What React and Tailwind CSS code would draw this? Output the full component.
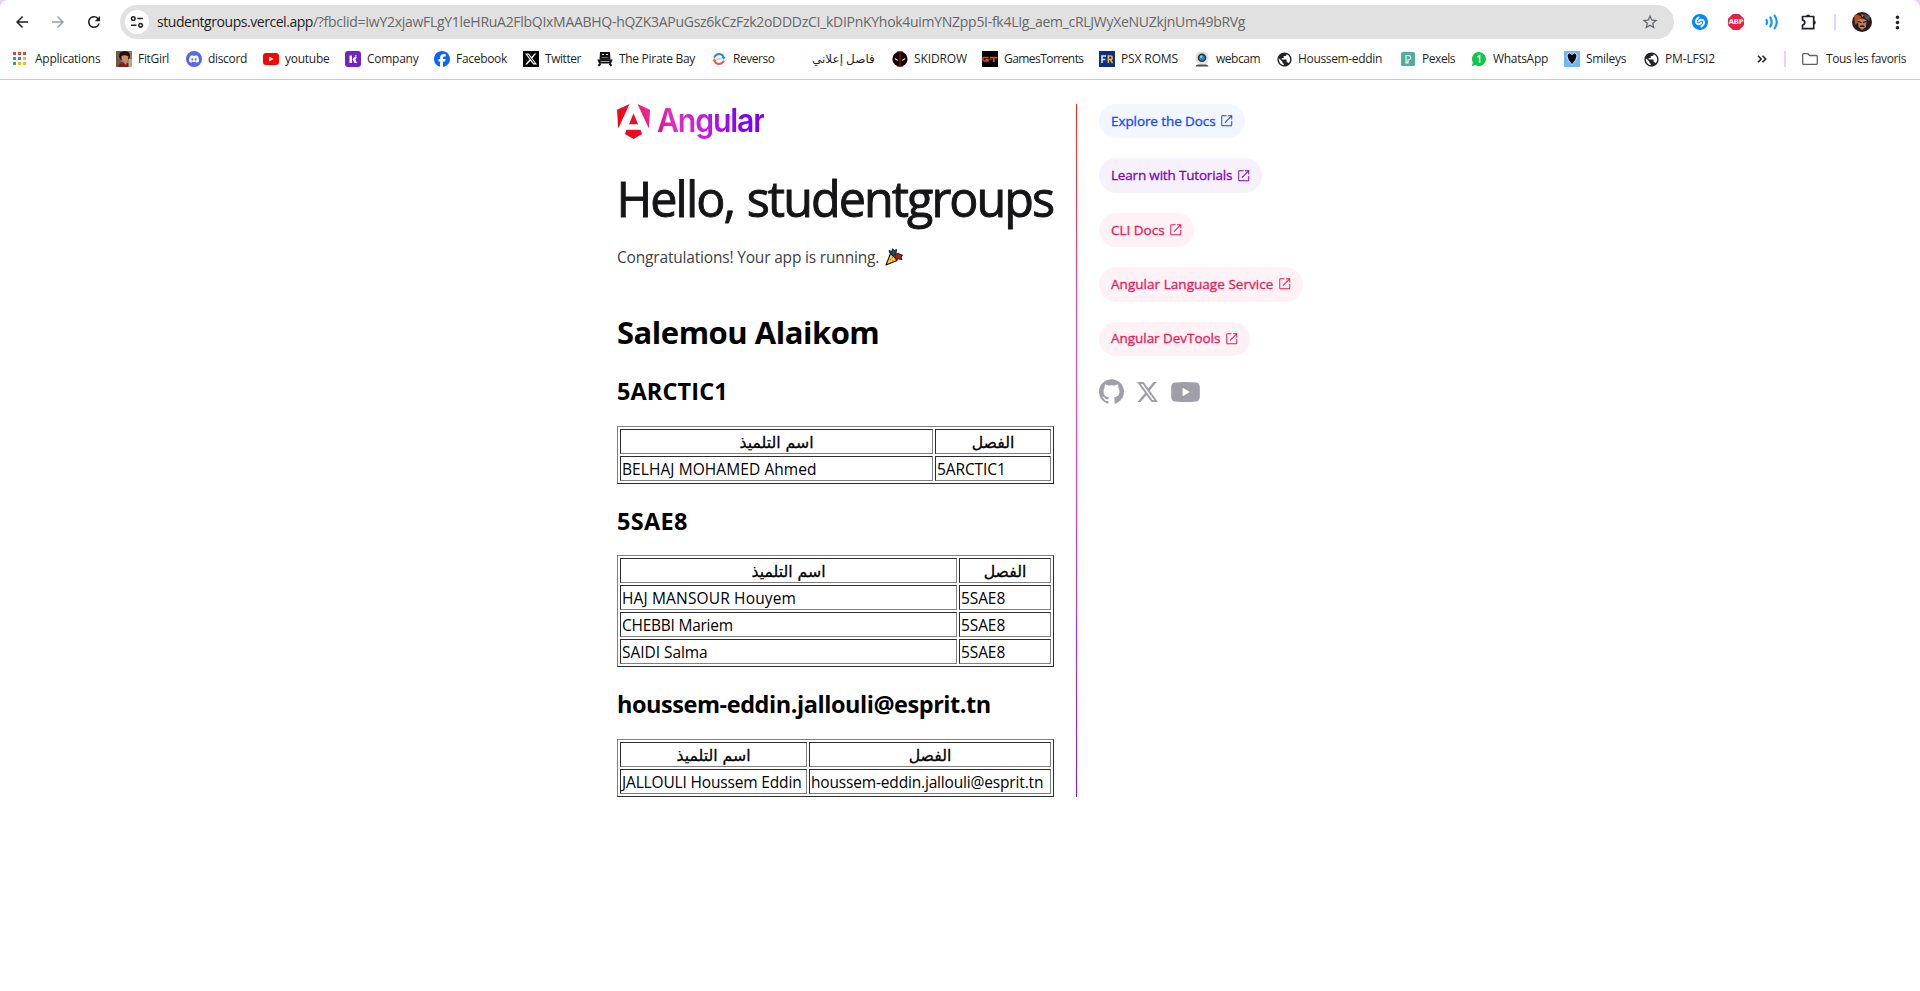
import { MdArrowBack, MdArrowForward, MdRefresh, MdStarBorder, MdMoreVert, MdPublic } from "react-icons/md";
import { SiDiscord, SiFacebook, SiGithub, SiShazam, SiX } from "react-icons/si";

const Box = ({ children }) => (
  <svg width="16" height="16" viewBox="0 0 16 16" className="shrink-0">
    {children}
  </svg>
);

const AppsIcon = () => (
  <Box>
    {["#ea4335", "#ea4335", "#ea4335", "#34a853", "#1a8cff", "#fbbc05", "#34a853", "#fbbc05", "#fbbc05"].map((c, i) => (
      <rect key={i} x={(i % 3) * 5} y={Math.floor(i / 3) * 5 + 1} width="3" height="3" fill={c} />
    ))}
  </Box>
);

const FitGirlIcon = () => (
  <Box>
    <rect width="16" height="16" fill="#8b7a5c" />
    <rect width="5" height="16" fill="#6b5d4a" />
    <path d="M3 6Q3 0 8.500 0Q14.500 0 14 6L12.500 9L5 9Z" fill="#2a0f0c" />
    <path d="M5.500 5Q9 3.500 12.300 5.500Q12.500 10 9.500 11.500Q6.500 11 5.500 8Z" fill="#d08a68" />
    <path d="M2 16Q3 11 7.500 11L13 12.500L14.500 16Z" fill="#7c1f1a" />
    <path d="M7 11L10 14L11 11Z" fill="#c98a6c" />
    <rect x="12.500" y="8" width="3.500" height="8" fill="#b9aa8e" />
  </Box>
);

const DiscordIcon = () => (
  <span className="flex size-4 shrink-0 items-center justify-center rounded-full bg-[#5865f2] text-white">
    <SiDiscord size={10} />
  </span>
);

const YoutubeIcon = () => (
  <Box>
    <rect y="2" width="16" height="12" rx="3" fill="#f00" />
    <path d="M6.200 5.500V10.500L10.600 8Z" fill="#fff" />
  </Box>
);

const CompanyIcon = () => (
  <Box>
    <rect width="16" height="16" rx="3" fill="#7222c9" />
    <path d="M4.500 4.500H7V12H4.500Z" fill="#fff" />
    <path d="M7.500 8.300L9.500 6H12L10.300 8.500L12 12H9.500Z" fill="#fff" />
    <circle cx="10.800" cy="4.800" r="1.100" fill="#7fd8ff" />
  </Box>
);

const FacebookIcon = () => <SiFacebook size={16} color="#0866ff" className="shrink-0" />;

const TwitterIcon = () => (
  <span className="flex size-4 shrink-0 items-center justify-center bg-black text-white">
    <SiX size={12} />
  </span>
);

const PirateIcon = () => (
  <Box>
    <path d="M3 1H13L13.500 8.700H2.500Z" fill="#111" />
    <path d="M5 3.500H7M9 3.500H11" stroke="#fff" strokeWidth="0.900" />
    <path d="M4.500 6.500H11.500" stroke="#999" strokeWidth="0.700" />
    <path d="M0.300 8.500H15.700L14 12.500H2Z" fill="#111" />
    <path d="M3.500 10.500H12.500" stroke="#ccc" strokeWidth="0.800" />
    <path d="M1.500 14.800L3.500 12.500M14.500 14.800L12.500 12.500" stroke="#111" strokeWidth="2" fill="none" />
  </Box>
);

const ReversoIcon = () => (
  <Box>
    <rect width="16" height="16" rx="2" fill="#f6fafe" />
    <path d="M3 6.500Q5 2.800 8.500 3Q11.800 3.300 12.600 6.300" stroke="#2e86d8" strokeWidth="1.800" fill="none" />
    <path d="M10.500 6H14.500L12.700 8.700Z" fill="#2e86d8" />
    <path d="M13 9.800Q11 13.200 7.500 13Q4.200 12.700 3.400 9.800" stroke="#ef5a45" strokeWidth="1.800" fill="none" />
    <path d="M1.500 10H5.500L3.300 7.300Z" fill="#ef5a45" />
    <path d="M5.500 8H10.500" stroke="#8fb9dc" strokeWidth="1" />
  </Box>
);

const SkidrowIcon = () => (
  <Box>
    <circle cx="8" cy="8" r="7.600" fill="#160305" />
    <path d="M8 0.400V15.600" stroke="#7c1016" strokeWidth="1.400" />
    <path d="M5 1L8 0.300L11 1M5 15L8 15.700L11 15" stroke="#a3141b" strokeWidth="0.900" fill="none" />
    <path d="M2.600 7L6.600 9.200Q3.600 10.600 2.600 7ZM13.400 7L9.400 9.200Q12.400 10.600 13.400 7Z" fill="#fff" />
  </Box>
);

const GamesIcon = () => (
  <Box>
    <rect width="16" height="16" fill="#000" />
    <path d="M6.500 6.600H2.200Q0.900 6.600 0.900 8.300Q0.900 10 2.200 10H6V8.400H3.500" stroke="#e2461c" strokeWidth="1.500" fill="none" />
    <path d="M8 6.600H15.600M11.800 6.600V11" stroke="#e2461c" strokeWidth="1.700" fill="none" />
    <path d="M6 8.300H10" stroke="#a32c10" strokeWidth="1" />
  </Box>
);

const PsxIcon = () => (
  <Box>
    <rect width="16" height="16" fill="#0b3187" />
    <path d="M3 12V5H7M3 8.500H6.300" stroke="#dfe6f2" strokeWidth="1.600" fill="none" />
    <path d="M9.300 12V5H11.500Q13.200 5 13.200 6.700Q13.200 8.500 11.500 8.500H9.500M11.300 8.500L13.500 12" stroke="#f2b92c" strokeWidth="1.500" fill="none" />
  </Box>
);

const WebcamIcon = () => (
  <Box>
    <rect x="1.500" y="0.500" width="13" height="12.500" rx="5" fill="#e2e2e2" />
    <circle cx="8" cy="6.800" r="4.300" fill="#2b3137" />
    <circle cx="8" cy="6.800" r="2.900" fill="#1c86c9" />
    <circle cx="7.200" cy="5.700" r="1.200" fill="#8fd3f5" />
    <path d="M1.500 15.500Q2 13.300 5 13.500H11Q14 13.300 14.500 15.500Z" fill="#4b4b4b" />
  </Box>
);

const GlobeIcon = () => <MdPublic size={17} color="#202124" className="-mx-[0.5px] shrink-0" />;

const PexelsIcon = () => (
  <Box>
    <rect x="1" y="1" width="14" height="14" rx="1.500" fill="#4fae9c" />
    <path d="M6 12V4.500H8.500Q10.700 4.500 10.700 6.600Q10.700 8.700 8.500 8.700H8V12Z" stroke="#fff" strokeWidth="1.100" fill="none" />
  </Box>
);

const WhatsappIcon = () => (
  <Box>
    <path d="M8 1A7 7 0 1 1 4.500 14.100L0.800 15.200L1.900 11.500A7 7 0 0 1 8 1Z" fill="#12c64a" />
    <path d="M6.300 6.200L8.600 4.700V11.800" stroke="#fff" strokeWidth="1.500" fill="none" />
  </Box>
);

const SmileysIcon = () => (
  <Box>
    <rect width="16" height="16" fill="#6fb7f7" />
    <path d="M8 13.800Q3 8.500 3 5Q3 2 5.500 2Q7.300 2 8 3.700Q8.700 2 10.500 2Q13 2 13 5Q13 8.500 8 13.800Z" fill="#0a0a14" stroke="#e8f4ff" strokeWidth="0.900" />
  </Box>
);

const FolderIcon = () => (
  <svg width="16" height="16" viewBox="0 0 16 16" fill="none" className="shrink-0">
    <path d="M1.700 2.700H6L7.600 4.500H14.300Q15.300 4.500 15.300 5.500V12.400Q15.300 13.400 14.300 13.400H1.700Q0.700 13.400 0.700 12.400V3.700Q0.700 2.700 1.700 2.700Z" stroke="#5f6368" strokeWidth="1.300" />
  </svg>
);

const bookmarks = [
  { label: "Applications", Icon: AppsIcon, box: "w-[103px]", text: "tracking-[-0.24px]" },
  { label: "FitGirl", Icon: FitGirlIcon, box: "w-[70px]", text: "tracking-[-0.3px]" },
  { label: "discord", Icon: DiscordIcon, box: "w-[77px]", text: "tracking-[-0.33px]" },
  { label: "youtube", Icon: YoutubeIcon, box: "w-[82px]", text: "tracking-[-0.26px]" },
  { label: "Company", Icon: CompanyIcon, box: "w-[89px]", text: "tracking-[-0.26px]" },
  { label: "Facebook", Icon: FacebookIcon, box: "w-[89px]", text: "tracking-[-0.3px]" },
  { label: "Twitter", Icon: TwitterIcon, box: "w-[74px]", text: "tracking-[-0.44px]" },
  { label: "The Pirate Bay", Icon: PirateIcon, box: "w-[114px]", text: "tracking-[-0.3px]" },
  { label: "Reverso", Icon: ReversoIcon, box: "w-[79px]", text: "tracking-[-0.46px]" },
  { label: "فاصل إعلاني", Icon: Box, box: "w-[102px]", text: "tracking-normal" },
  { label: "SKIDROW", Icon: SkidrowIcon, box: "w-[90px]", text: "tracking-[-0.11px]" },
  { label: "GamesTorrents", Icon: GamesIcon, box: "w-[117px]", text: "tracking-[-0.55px]" },
  { label: "PSX ROMS", Icon: PsxIcon, box: "w-[95px]", text: "tracking-[-0.12px]" },
  { label: "webcam", Icon: WebcamIcon, box: "w-[82px]", text: "tracking-[-0.48px]" },
  { label: "Houssem-eddin", Icon: GlobeIcon, box: "w-[124px]", text: "tracking-[-0.34px]" },
  { label: "Pexels", Icon: PexelsIcon, box: "w-[71px]", text: "tracking-[-0.45px]" },
  { label: "WhatsApp", Icon: WhatsappIcon, box: "w-[93px]", text: "tracking-[-0.3px]" },
  { label: "Smileys", Icon: SmileysIcon, box: "w-[79px]", text: "tracking-[-0.31px]" },
  { label: "PM-LFSI2", Icon: GlobeIcon, box: "w-[114px]", text: "tracking-[-0.14px]" },
];

const Slot = ({ children }) => <div className="flex h-full w-9 shrink-0 items-center justify-center">{children}</div>;

function Toolbar() {
  return (
    <div className="flex h-11 items-center pl-1">
      <Slot><MdArrowBack size={18} color="#202124" /></Slot>
      <Slot><MdArrowForward size={18} color="#9aa0a6" /></Slot>
      <Slot><MdRefresh size={18} color="#202124" /></Slot>
      <div className="ml-2 flex h-[34px] w-[1554px] shrink-0 items-center rounded-full bg-[#e1e1e1] pl-[5px] pr-[15px]">
        <span className="flex size-6 shrink-0 items-center justify-center rounded-full bg-white">
          <svg width="14" height="14" viewBox="0 0 14 14" fill="none" stroke="#202124" strokeWidth="1.500">
            <circle cx="3.300" cy="3.600" r="1.800" />
            <path d="M7.300 3.600H12.800M1 10.300H6.500" />
            <circle cx="10.600" cy="10.300" r="1.800" />
          </svg>
        </span>
        <span className="ml-2 flex grow whitespace-nowrap text-[14px] leading-5">
          <span className="tracking-[-0.45px] text-[#1f1f1f]">studentgroups.vercel.app</span>
          <span className="tracking-[-0.285px] text-[#686868]">/?fbclid=IwY2xjawFLgY1leHRuA2FlbQIxMAABHQ-hQZK3APuGsz6kCzFzk2oDDDzCI_kDIPnKYhok4uimYNZpp5I-fk4LIg_aem_cRLJWyXeNUZkjnUm49bRVg</span>
        </span>
        <MdStarBorder size={18} color="#5f6368" />
      </div>
      <div className="ml-2 flex h-full">
        <Slot><SiShazam size={16} color="#0088ff" /></Slot>
        <Slot>
          <span className="flex size-4 items-center justify-center bg-[#ed1e45] text-[7.5px] font-bold leading-none tracking-[-0.2px] text-white [clip-path:polygon(30%_0,70%_0,100%_30%,100%_70%,70%_100%,30%_100%,0_70%,0_30%)]">ABP</span>
        </Slot>
        <Slot>
          <svg width="14" height="16" viewBox="0 0 14 16" fill="none" stroke="#1a94ff" strokeWidth="2.200" strokeLinecap="round">
            <path d="M1.500 6Q2.600 8 1.500 10M5.300 3.500Q8 8 5.300 12.500M9.600 1.700Q14 8 9.600 14.300" />
          </svg>
        </Slot>
        <Slot>
          <svg width="18" height="18" viewBox="0 0 18 18" fill="none" className="ml-[2px]">
            <path d="M2.500 3.500H13.700V15.700H2.500V12Q4.800 11.800 4.800 9.600Q4.800 7.400 2.500 7.200Z" stroke="#202124" strokeWidth="1.700" strokeLinejoin="round" />
            <path d="M6 3.500A2.100 2.100 0 0 1 10.200 3.500ZM13.700 7.500A2.100 2.100 0 0 1 13.700 11.700Z" fill="#202124" />
          </svg>
        </Slot>
      </div>
      <div className="ml-2 h-4 w-[2px] bg-[#e6d3fb]" />
      <svg width="20" height="20" viewBox="0 0 20 20" className="ml-4 shrink-0 overflow-hidden rounded-full">
        <rect width="20" height="20" fill="#2b1a17" />
        <path d="M2 2L9 4L8 9L3 13Z" fill="#b3501f" />
        <path d="M12 2L18 4L17 9L13 6Z" fill="#4d5060" />
        <path d="M6 8Q10 5 14.500 8.500L14 15L10 18L6.500 15Z" fill="#b87d60" />
        <path d="M6 9.500L9.500 10.500M11 10.500L14.500 9.500M8 14.500Q10 13.500 12.500 14.500" stroke="#2b1210" strokeWidth="1.300" />
        <path d="M9 2L10.500 5.500L12 3Z" fill="#c07a2b" />
      </svg>
      <div className="ml-[13px] flex w-6 justify-center"><MdMoreVert size={21} color="#202124" className="shrink-0" /></div>
    </div>
  );
}

function BookmarksBar() {
  return (
    <div className="flex h-[35px] items-center pb-[5px] pl-[13px] text-[12px] leading-4 text-[#1f1f1f]">
      {bookmarks.map(({ label, Icon, box, text }) => (
        <div key={label} className={`flex shrink-0 items-center gap-[6px] whitespace-nowrap ${box}`}>
          <Icon />
          <span className={text}>{label}</span>
        </div>
      ))}
      <svg width="10" height="8" viewBox="0 0 10 8" fill="none" stroke="#202124" strokeWidth="1.600" className="shrink-0">
        <path d="M1 0.700L4.200 4L1 7.300M5.500 0.700L8.700 4L5.500 7.300" />
      </svg>
      <div className="ml-[17px] h-4 w-[2px] shrink-0 bg-[#e6d3fb]" />
      <div className="ml-4 flex shrink-0 items-center gap-2 whitespace-nowrap">
        <FolderIcon />
        <span className="tracking-[-0.39px]">Tous les favoris</span>
      </div>
    </div>
  );
}

function AngularLogo() {
  return (
    <div className="flex h-9 items-start">
      <svg width="34" height="36" viewBox="0.660 0 23.300 24.700">
        <defs>
          <linearGradient id="mark" gradientUnits="userSpaceOnUse" x1="3" y1="16" x2="24" y2="4">
            <stop offset="0" stopColor="#f0060b" />
            <stop offset="0.450" stopColor="#ec0c30" />
            <stop offset="1" stopColor="#f02fb8" />
          </linearGradient>
        </defs>
        <path fill="url(#mark)" d="M16.712 17.711H7.288l-1.204 2.916L12 24l5.916-3.373-1.204-2.916ZM14.692 0l7.832 16.855.814-12.856L14.692 0ZM9.308 0 .662 3.999l.814 12.856L9.308 0Zm-.405 13.930h6.198L12 6.396 8.903 13.930Z" />
      </svg>
      <span className="-mt-[4px] ml-[6px] inline-block origin-left scale-x-[0.93] bg-[linear-gradient(75deg,#d0127c_0%,#e62bc0_18%,#c31fe0_42%,#8001f0_78%,#7702ff_100%)] bg-clip-text font-[Inter,sans-serif] text-[32.5px] font-semibold leading-[42px] tracking-[-1.25px] text-transparent">
        Angular
      </span>
    </div>
  );
}

const PartyPopper = () => (
  <svg width="18" height="18" viewBox="0 0 18 18">
    <path d="M1 17L5.500 5.500Q9.500 8 12 12.500Z" fill="#ffc83d" stroke="#111" strokeWidth="1.100" strokeLinejoin="round" />
    <path d="M4 2.500L7 3.500L7.500 0.800L9.500 2.500L11.500 1.500L11 6L8.500 8L5 5.500Z" fill="#1b4a6b" stroke="#111" strokeWidth="0.900" />
    <path d="M10.500 7L13 5L15 6.500L17.500 7L16 9L17 11.500L13.500 11L11.500 11.500L9.500 8.500Z" fill="#a3221c" stroke="#111" strokeWidth="0.900" />
    <circle cx="5.500" cy="11.500" r="0.800" fill="#e8552b" />
    <circle cx="8" cy="12.800" r="0.800" fill="#e8552b" />
    <circle cx="7.500" cy="9.300" r="0.700" fill="#2f8fd0" />
  </svg>
);

const cell = "h-[25px] border border-t-[#2c2c2c] border-l-[#2c2c2c] border-b-[#808080] border-r-[#808080] px-px pt-[2px] pb-0";

function GroupTable({ rows, first, second }) {
  return (
    <table className="w-[437px] table-fixed border-separate border-spacing-[2px] border border-t-[#808080] border-l-[#808080] border-b-[#2c2c2c] border-r-[#2c2c2c] text-[15.5px] leading-[21px] text-black">
      <colgroup>
        <col className={first} />
        <col className={second} />
      </colgroup>
      <thead>
        <tr className="font-['DejaVu_Sans',sans-serif] text-[15.7px]">
          <th className={`${cell} font-normal [-webkit-text-stroke:0.3px_black]`}>اسم التلميذ</th>
          <th className={`${cell} font-normal [-webkit-text-stroke:0.3px_black]`}>الفصل</th>
        </tr>
      </thead>
      <tbody>
        {rows.map((r) => (
          <tr key={r.name} className="whitespace-nowrap">
            <td className={`${cell} ${r.nameTracking}`}>{r.name}</td>
            <td className={`${cell} ${r.groupTracking}`}>{r.group}</td>
          </tr>
        ))}
      </tbody>
    </table>
  );
}

const pills = [
  { label: "Explore the Docs", cls: "w-[146px] bg-[#f1f6ff] text-[#1545ff] tracking-[-0.09px]" },
  { label: "Learn with Tutorials", cls: "w-[163px] bg-[#f7f1fe] text-[#8001c6] tracking-[-0.18px]" },
  { label: "CLI Docs", cls: "w-[95px] bg-[#fff2f6] text-[#f11653] tracking-normal" },
  { label: "Angular Language Service", cls: "w-[204px] bg-[#fff2f6] text-[#f11653] tracking-[0.04px]" },
  { label: "Angular DevTools", cls: "w-[151px] bg-[#fff2f6] text-[#f11653] tracking-[-0.04px]" },
];

function Pill({ label, cls }) {
  return (
    <a className={`flex h-[34.4px] items-center justify-between whitespace-nowrap rounded-full pb-[0.6px] pl-3 pr-[11px] text-[13.5px] leading-[22px] [-webkit-text-stroke:0.3px_currentColor] ${cls}`}>
      <span>{label}</span>
      <svg width="15.500" height="15.500" viewBox="0 -960 960 960" fill="currentColor" className="shrink-0">
        <path d="M212.310-140Q182-140 161-161q-21-21-21-51.310v-535.380Q140-778 161-799q21-21 51.310-21h252.300v60h-252.300q-4.620 0-8.460 3.850-3.850 3.840-3.850 8.460v535.380q0 4.620 3.850 8.460 3.840 3.850 8.460 3.850h535.380q4.620 0 8.460-3.850 3.850-3.840 3.850-8.460v-252.300h60v252.300Q820-182 799-161q-21 21-51.310 21H212.310Zm176.460-206.620-42.150-42.150L717.850-760H560v-60h260v260h-60v-157.850L388.770-346.620Z" />
      </svg>
    </a>
  );
}

export default function App() {
  return (
    <div className="min-h-[991px] w-[1920px] overflow-hidden bg-white font-['Open_Sans','DejaVu_Sans',sans-serif]">
      <header className="h-20 border-b border-[#cbcbcb] bg-[#e6d3fb]">
        <div className="h-full rounded-t-[8px] bg-white">
          <Toolbar />
          <BookmarksBar />
        </div>
      </header>

      <main className="flex justify-center gap-[22px] pt-6">
        <section className="w-[437px]">
          <AngularLogo />
          <h1 className="-ml-px mt-[33px] whitespace-nowrap pl-[0.5px] text-[48.5px] leading-[50px] tracking-[-1.95px] text-[#151417] [-webkit-text-stroke:0.9px_#151417] [word-spacing:2px]">
            Hello, studentgroups
          </h1>
          <div className="mt-[22px] flex h-6 items-center gap-[6px] whitespace-nowrap text-[15.5px] leading-6 text-[#3f3d46]">
            <p className="tracking-[-0.18px]">Congratulations! Your app is running.</p>
            <PartyPopper />
          </div>
          <h1 className="mt-[42px] text-[31px] font-bold leading-[43px] tracking-[-0.48px] text-black">Salemou Alaikom</h1>

          <h2 className="mb-[19px] mt-[21px] text-[23.5px] font-bold leading-8 tracking-[0.1px] text-black">5ARCTIC1</h2>
          <GroupTable
            first="w-[313px]"
            second="w-[116px]"
            rows={[{ name: "BELHAJ MOHAMED Ahmed", group: "5ARCTIC1", nameTracking: "tracking-[0.08px]", groupTracking: "tracking-[-0.1px]" }]}
          />

          <h2 className="mb-[18px] mt-[21px] text-[23.5px] font-bold leading-8 tracking-[0.3px] text-black">5SAE8</h2>
          <GroupTable
            first="w-[337px]"
            second="w-[92px]"
            rows={[
              { name: "HAJ MANSOUR Houyem", group: "5SAE8", nameTracking: "tracking-[0.15px]", groupTracking: "tracking-[-0.1px]" },
              { name: "CHEBBI Mariem", group: "5SAE8", nameTracking: "tracking-[-0.25px]", groupTracking: "tracking-[-0.1px]" },
              { name: "SAIDI Salma", group: "5SAE8", nameTracking: "tracking-[-0.05px]", groupTracking: "tracking-[-0.1px]" },
            ]}
          />

          <h2 className="mb-[19px] mt-[21px] text-[23.5px] font-bold leading-8 tracking-[-0.45px] text-black">houssem-eddin.jallouli@esprit.tn</h2>
          <GroupTable
            first="w-[187px]"
            second="w-[242px]"
            rows={[{ name: "JALLOULI Houssem Eddin", group: "houssem-eddin.jallouli@esprit.tn", nameTracking: "tracking-[-0.16px]", groupTracking: "tracking-[-0.17px]" }]}
          />
        </section>

        <div className="w-px bg-[linear-gradient(180deg,#ff2a12_0%,#ff41a0_35%,#f637e3_50%,#8514f5_100%)]" />

        <aside className="w-[204px]">
          <div className="flex flex-col items-start gap-5">
            {pills.map((p) => (
              <Pill key={p.label} {...p} />
            ))}
          </div>
          <div className="mt-[24px] flex h-[24px] items-center text-[#a09ea8]">
            <SiGithub size={25} />
            <svg width="21" height="20" viewBox="0 1.150 24 21.700" preserveAspectRatio="none" fill="currentColor" className="ml-[13px]">
              <path d="M18.901 1.153h3.680l-8.040 9.190L24 22.846h-7.406l-5.800-7.584-6.638 7.584H0.474l8.600-9.830L0 1.154h7.594l5.243 6.932ZM17.610 20.644h2.039L6.486 3.240H4.298Z" />
            </svg>
            <svg width="29" height="20" viewBox="0 0 29 20" className="ml-[13px]">
              <path fillRule="evenodd" fill="currentColor" d="M4 0.500Q14.500-0.500 25 0.500Q28.200 0.900 28.600 4Q29.200 10 28.600 16Q28.200 19.100 25 19.500Q14.500 20.500 4 19.500Q0.800 19.100 0.400 16Q-0.200 10 0.400 4Q0.800 0.900 4 0.500ZM11.600 5.800V14.200L19 10Z" />
            </svg>
          </div>
        </aside>
      </main>
    </div>
  );
}
